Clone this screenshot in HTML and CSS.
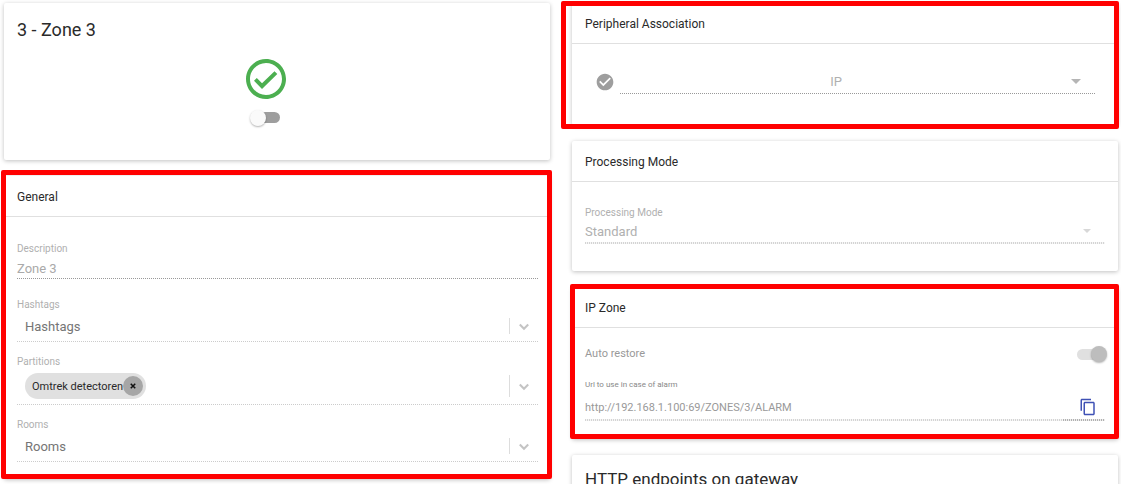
FILE: index.html
```html
<!DOCTYPE html>
<html lang="en">
<head>
  <meta charset="UTF-8">
  <meta name="viewport" content="width=device-width, initial-scale=1.0">
  <title>Zone 3</title>
  <link rel="stylesheet" href="styles.css">
</head>
<body>
  <main class="page">
    <div class="column">
      <section class="card">
        <h1 class="title">3 - Zone 3</h1>
        <div class="status">
          <svg class="status-icon" viewBox="0 0 24 24" aria-hidden="true">
            <path d="M16.250 8.150L10 14.170l-2.600-2.650L6 12.900l4 4.050 7.650-7.400zM12 2C6.480 2 2 6.480 2 12s4.480 10 10 10 10-4.480 10-10S17.520 2 12 2zm0 18c-4.420 0-8-3.580-8-8s3.580-8 8-8 8 3.580 8 8-3.580 8-8 8z"/>
          </svg>
          <input class="switch" type="checkbox" aria-label="Zone 3 enabled">
        </div>
      </section>

      <section class="card marked marked-general">
        <h2 class="card-head">General</h2>
        <div class="general">
          <div class="field field-first">
            <label class="label" for="description">Description</label>
            <input class="text" id="description" type="text" value="Zone 3" disabled>
          </div>
          <div class="field">
            <label class="label" for="hashtags">Hashtags</label>
            <div class="multi">
              <select class="multi-select" id="hashtags"><option>Hashtags</option></select>
              <span class="separator"></span>
              <svg class="chevron" viewBox="0 0 20 20" aria-hidden="true"><path d="M4 8l6 6 6-6"/></svg>
            </div>
          </div>
          <div class="field">
            <label class="label" for="partitions">Partitions</label>
            <div class="multi multi-tall">
              <span class="chip">Omtrek detectoren
                <button class="chip-remove" type="button" aria-label="Remove Omtrek detectoren">
                  <svg viewBox="0 0 8 8" aria-hidden="true"><path d="M1 1l6 6M7 1L1 7"/></svg>
                </button>
              </span>
              <select class="multi-select" id="partitions"><option></option></select>
              <span class="separator"></span>
              <svg class="chevron" viewBox="0 0 20 20" aria-hidden="true"><path d="M4 8l6 6 6-6"/></svg>
            </div>
          </div>
          <div class="field">
            <label class="label" for="rooms">Rooms</label>
            <div class="multi">
              <select class="multi-select" id="rooms"><option>Rooms</option></select>
              <span class="separator"></span>
              <svg class="chevron" viewBox="0 0 20 20" aria-hidden="true"><path d="M4 8l6 6 6-6"/></svg>
            </div>
          </div>
        </div>
      </section>
    </div>

    <div class="column">
      <section class="card marked marked-peripheral">
        <h2 class="card-head">Peripheral Association</h2>
        <div class="peripheral">
          <svg class="peripheral-icon" viewBox="0 0 24 24" aria-hidden="true">
            <path d="M12 2C6.480 2 2 6.480 2 12s4.480 10 10 10 10-4.480 10-10S17.520 2 12 2zm-2 15l-5-5 1.410-1.410L10 14.170l7.590-7.590L19 8l-9 9z"/>
          </svg>
          <div class="picker">
            <select class="picker-select picker-center" aria-label="Peripheral" disabled><option>IP</option></select>
            <svg class="arrow" viewBox="0 0 10 5" aria-hidden="true"><path d="M0 0h10L5 5z"/></svg>
          </div>
        </div>
      </section>

      <section class="card">
        <h2 class="card-head">Processing Mode</h2>
        <div class="processing">
          <label class="label" for="mode">Processing Mode</label>
          <div class="picker picker-light">
            <select class="picker-select" id="mode" disabled><option>Standard</option></select>
            <svg class="arrow" viewBox="0 0 10 5" aria-hidden="true"><path d="M0 0h10L5 5z"/></svg>
          </div>
        </div>
      </section>

      <section class="card marked marked-ip">
        <h2 class="card-head">IP Zone</h2>
        <div class="ip-zone">
          <div class="restore">
            <label for="restore">Auto restore</label>
            <input class="switch" id="restore" type="checkbox" checked disabled>
          </div>
          <label class="url-label" for="url">Url to use in case of alarm</label>
          <div class="url">
            <input class="url-input" id="url" type="text" value="http://192.168.1.100:69/ZONES/3/ALARM" readonly>
            <button class="copy" type="button" aria-label="Copy url">
              <svg viewBox="0 0 24 24" aria-hidden="true">
                <path d="M16 1H4c-1.100 0-2 .9-2 2v14h2V3h12V1zm3 4H8c-1.100 0-2 .9-2 2v14c0 1.100.9 2 2 2h11c1.100 0 2-.9 2-2V7c0-1.100-.9-2-2-2zm0 16H8V7h11v14z"/>
              </svg>
            </button>
          </div>
        </div>
      </section>

      <section class="card">
        <h2 class="title title-small">HTTP endpoints on gateway</h2>
      </section>
    </div>
  </main>
</body>
</html>
```

FILE: styles.css
```css
* {
  box-sizing: border-box;
  margin: 0;
  padding: 0;
}
body {
  font-family: Roboto, "Liberation Sans", sans-serif;
  font-size: 12px;
  color: #2a2a2a;
  background-color: #fff;
}
input, select, button {
  font: inherit;
  color: inherit;
  border: 0;
  border-radius: 0;
  background: none;
  appearance: none;
  opacity: 1;
  min-width: 0;
}
.page {
  display: grid;
  grid-template-columns: 1fr 1fr;
  gap: 22px;
  height: 100vh;
  padding: 3px 3px 0 4px;
  overflow: hidden;
}
.column {
  display: flex;
  flex-direction: column;
  gap: 16px;
}
.card {
  border-radius: 2px;
  background-color: #fff;
  box-shadow: 0 1px 4px rgba(0, 0, 0, .25);
}
.title {
  padding: 15px 13px 13px;
  font-size: 18px;
  font-weight: 400;
  line-height: 24px;
}
.title-small {
  padding-top: 12px;
  font-size: 17px;
}
.card-head {
  padding: 13px 13px 11px;
  font-size: 12px;
  font-weight: 400;
  line-height: 16px;
  border-bottom: 1px solid #e0e0e0;
}

/* red frame over a card */
.marked {
  position: relative;
}
.marked::after {
  content: "";
  position: absolute;
  border: 5px solid #f00;
  border-radius: 2px;
  pointer-events: none;
}
.marked-general::after {
  inset: -6px -2px 0 -3px;
}
.marked-peripheral::after {
  inset: -2px -1px -4px -11px;
}
.marked-ip::after {
  inset: -3px -1px 0 -2px;
}

.status {
  display: flex;
  flex-direction: column;
  align-items: center;
  gap: 9px;
  padding: 0 22px 37px 0;
}
.status-icon {
  width: 48px;
  height: 48px;
  fill: #4caf50;
}
.switch {
  display: flex;
  align-items: center;
  width: 28px;
  height: 11px;
  border-radius: 6px;
  background-color: #9e9e9e;
}
.switch::before {
  content: "";
  flex: none;
  width: 16px;
  height: 16px;
  margin: 0 -2px;
  border-radius: 50%;
  background-color: #fafafa;
  box-shadow: 0 1px 2px rgba(0, 0, 0, .3);
}
.switch:checked {
  justify-content: flex-end;
  background-color: #e0e0e0;
}
.switch:checked::before {
  background-color: #bdbdbd;
}

.general {
  display: flex;
  flex-direction: column;
  gap: 12px;
  padding: 24px 12px 17px 13px;
}
.general .label {
  padding-top: 1px;
}
.field-first {
  margin-bottom: 6px;
}
.label {
  display: block;
  height: 14px;
  font-size: 10px;
  line-height: 14px;
  color: #b0b0b0;
}
.text {
  display: block;
  width: 100%;
  height: 24px;
  padding-top: 3px;
  font-size: 13px;
  color: #aaa;
  border-bottom: 1px dotted #999;
}
.multi {
  display: flex;
  align-items: center;
  height: 31px;
  padding-left: 8px;
  border-bottom: 1px dotted #ccc;
}
.multi-tall {
  height: 37px;
}
.multi-select {
  flex: 1;
  align-self: stretch;
  font-size: 13px;
  color: #757575;
}
.separator {
  align-self: stretch;
  width: 1px;
  margin: 7px 0;
  background-color: #ddd;
}
.chevron {
  width: 14px;
  height: 14px;
  margin: 0 7px;
  fill: none;
  stroke: #c4c4c4;
  stroke-width: 3;
}
.chip {
  display: flex;
  align-items: center;
  height: 26px;
  padding: 0 3px 0 7px;
  font-size: 11px;
  border-radius: 13px;
  background-color: #e0e0e0;
}
.chip-remove {
  display: flex;
  align-items: center;
  justify-content: center;
  width: 20px;
  height: 20px;
  border-radius: 50%;
  background-color: #a6a6a6;
}
.chip-remove svg {
  width: 6px;
  height: 6px;
  stroke: #111;
  stroke-width: 2;
}

.peripheral {
  display: flex;
  align-items: center;
  gap: 5px;
  padding: 26px 23px 31px;
}
.peripheral-icon {
  width: 20px;
  height: 20px;
  fill: #9e9e9e;
}
.picker {
  flex: 1;
  display: flex;
  align-items: center;
  height: 24px;
  border-bottom: 1px dotted #999;
}
.picker-select {
  flex: 1;
  align-self: stretch;
  font-size: 13px;
  color: #b0b0b0;
}
.picker-center {
  text-align-last: center;
}
.arrow {
  width: 10px;
  height: 5px;
  margin: 0 14px 0 19px;
  fill: #b5b5b5;
}
.picker-light .arrow {
  width: 8px;
  height: 4px;
  fill: #d8d8d8;
}
.processing {
  padding: 24px 13px 27px;
}

/* two pixels high, one pixel wide dots */
.picker-light, .url-input, .copy {
  padding-bottom: 2px;
  border-bottom: 0;
  background: repeating-linear-gradient(to right, #d4d4d4 0 1px, #f6f6f6 1px 2px) bottom / 100% 2px no-repeat;
}

.ip-zone {
  padding: 18px 13px;
}
.restore {
  display: flex;
  align-items: center;
  justify-content: space-between;
  margin-bottom: 16px;
  font-size: 11px;
  line-height: 18px;
  height: 16px;
  color: #999;
}
.url-label {
  display: block;
  height: 12px;
  font-size: 8px;
  line-height: 14px;
  color: #888;
}
.url {
  display: flex;
  height: 31px;
}
.url-input {
  flex: 1;
  padding-top: 5px;
  font-size: 11px;
  color: #999;
}
.copy {
  display: flex;
  align-items: center;
  justify-content: flex-end;
  width: 42px;
  padding-top: 4px;
  padding-right: 8px;
  background-image: repeating-linear-gradient(to right, #b0b0b0 0 1px, #eee 1px 2px);
}
.copy svg {
  width: 18px;
  height: 18px;
  fill: #3f51b5;
}
```
